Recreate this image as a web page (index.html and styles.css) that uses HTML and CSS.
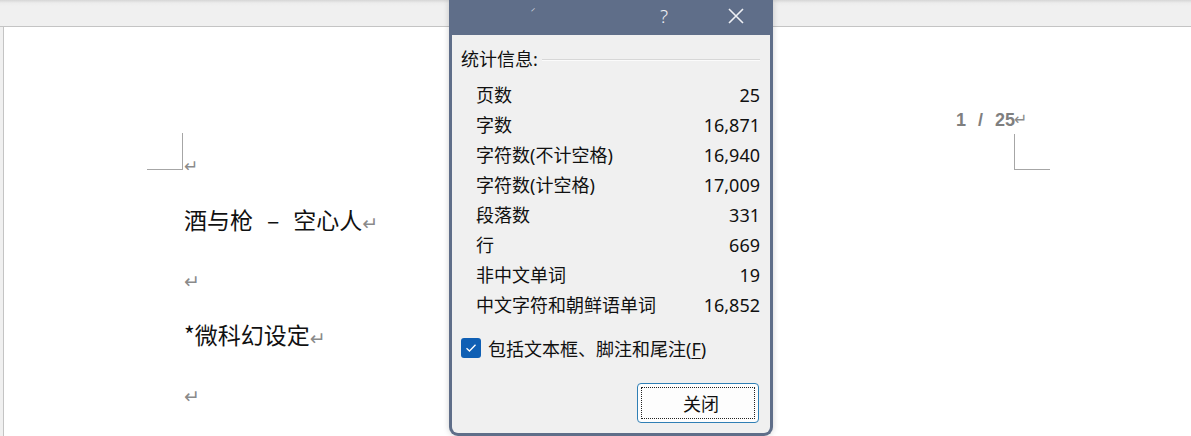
FILE: index.html
```html
<!DOCTYPE html>
<html lang="zh-CN">
<head>
<meta charset="utf-8">
<title>字数统计</title>
<link rel="stylesheet" href="styles.css">
</head>
<body>
<div class="app">
  <div class="topstrip"></div>
  <div class="page">
    <div class="header">
      <div class="mark-left"></div>
      <span class="ret ret-corner">↵</span>
      <div class="pagenum-group">
        <span class="pagenum">1 / 25</span>
        <span class="ret ret-num">↵</span>
        <span></span>
        <div class="mark-right"></div>
      </div>
    </div>
    <div class="doc">
      <p class="line">酒与枪<span class="dash">–</span>空心人<span class="ret">↵</span></p>
      <p class="line"><span class="ret">↵</span></p>
      <p class="line">*微科幻设定<span class="ret">↵</span></p>
      <p class="line"><span class="ret">↵</span></p>
    </div>
  </div>

  <div class="dialog">
    <div class="titlebar">
      <span class="title-frag">ˊ</span>
      <span class="tb-help">?</span>
      <span class="tb-close">
        <svg width="18" height="18" viewBox="0 0 18 18"><path d="M2 2 L16 16 M16 2 L2 16" stroke="#eef0f4" stroke-width="1.6" fill="none"/></svg>
      </span>
    </div>
    <div class="dlg-body">
      <div class="group-head">
        <span>统计信息:</span>
        <span class="sep"></span>
      </div>
      <div class="rows">
        <div class="row"><span>页数</span><span>25</span></div>
        <div class="row"><span>字数</span><span>16,871</span></div>
        <div class="row"><span>字符数(不计空格)</span><span>16,940</span></div>
        <div class="row"><span>字符数(计空格)</span><span>17,009</span></div>
        <div class="row"><span>段落数</span><span>331</span></div>
        <div class="row"><span>行</span><span>669</span></div>
        <div class="row"><span>非中文单词</span><span>19</span></div>
        <div class="row"><span>中文字符和朝鲜语单词</span><span>16,852</span></div>
      </div>
      <label class="check">
        <span class="box">
          <svg width="12" height="10" viewBox="0 0 12 10"><path d="M1.5 5.2 L4.5 8 L10.5 1.8" stroke="#fff" stroke-width="1.3" fill="none"/></svg>
        </span>
        <span>包括文本框、脚注和尾注(<u>F</u>)</span>
      </label>
      <div class="btn-row">
        <button class="btn"><span class="focus">关闭</span></button>
      </div>
    </div>
  </div>
</div>
</body>
</html>
```
FILE: styles.css
```css
html, body {
  margin: 0;
  padding: 0;
}
body {
  width: 1191px;
  height: 436px;
  overflow: hidden;
  background: #f0f0f0;
  font-family: "Noto Sans CJK SC", sans-serif;
}
.app {
  position: relative;
  width: 1191px;
  height: 436px;
  overflow: hidden;
}
.topstrip {
  height: 26px;
  background: linear-gradient(#d6d6d6 0, #ececec 3px, #f0f0f0 6px);
  border-bottom: 1px solid #c4c4c4;
}
.page {
  margin-left: 3px;
  border-left: 1px solid #c4c4c4;
  background: #fff;
  height: 409px;
}
.header {
  display: flex;
  align-items: flex-end;
  height: 143px;
}
.mark-left {
  margin-left: 143px;
  width: 35px;
  height: 36px;
  border-right: 1px solid #a6a6a6;
  border-bottom: 1px solid #a6a6a6;
}
.ret {
  font-family: "DejaVu Sans", sans-serif;
  color: #8a8a8a;
  font-size: 17px;
}
.ret-corner {
  line-height: 14px;
  margin-bottom: -3px;
  margin-left: 1px;
}
.pagenum-group {
  margin-left: auto;
  margin-right: 141px;
  display: grid;
  grid-template-columns: 58px 36px;
  align-items: end;
}
.pagenum {
  font-family: "Liberation Sans", Arial, sans-serif;
  font-weight: bold;
  font-size: 18px;
  color: #7f7f7f;
  line-height: 20px;
  word-spacing: 7px;
  white-space: nowrap;
  text-align: right;
  margin-bottom: 4px;
}
.ret-num {
  line-height: 20px;
  margin-bottom: 4px;
  font-size: 16px;
}
.mark-right {
  width: 35px;
  height: 35px;
  border-left: 1px solid #a6a6a6;
  border-bottom: 1px solid #a6a6a6;
}
.doc {
  padding-top: 21px;
  padding-left: 180px;
}
.line {
  margin: 0;
  height: 57.5px;
  line-height: 57.5px;
  font-size: 23px;
  color: #111;
}
.line .ret {
  font-size: 19px;
  position: relative;
  top: 1px;
}
.dash {
  margin: 0 14px 0 14px;
}

/* dialog */
.dialog {
  position: absolute;
  left: 449px;
  top: 0;
  width: 318px;
  height: 433px;
  background: #5f6e89;
  border: 3px solid #5f6e89;
  border-top: 0;
  border-radius: 0 0 9px 9px;
  box-shadow: 0 0 6px rgba(0, 0, 0, 0.18);
  display: flex;
  flex-direction: column;
}
.titlebar {
  height: 35px;
  display: flex;
  align-items: center;
  color: #eef0f4;
  flex-shrink: 0;
}
.title-frag {
  margin-left: 78px;
  font-size: 10px;
  color: #c9cfda;
  margin-top: -10px;
}
.tb-help {
  margin-left: auto;
  font-family: "Noto Sans", sans-serif;
  font-size: 19px;
  font-weight: 300;
  margin-top: -4px;
}
.tb-close {
  margin-left: 59px;
  margin-right: 25px;
  display: flex;
  margin-top: -4px;
}
.dlg-body {
  flex: 1;
  background: #f0f0f0;
  border-radius: 0 0 6px 6px;
  padding: 10px 0 0 0;
  font-family: "Noto Sans", "Noto Sans CJK SC", sans-serif;
  font-size: 18px;
  color: #111;
}
.group-head {
  display: flex;
  align-items: center;
  height: 28px;
  line-height: 28px;
  padding-left: 9px;
  padding-right: 10px;
}
.sep {
  flex: 1;
  margin-left: 4px;
  margin-top: 2px;
  border-top: 1px solid #d7d7d7;
  border-bottom: 1px solid #fbfbfb;
}
.rows {
  margin-top: 7px;
  padding-left: 24px;
  padding-right: 10px;
}
.row {
  display: flex;
  justify-content: space-between;
  height: 30px;
  line-height: 30px;
}
.check {
  margin-top: 13px;
  height: 30px;
  display: flex;
  align-items: center;
  padding-left: 9px;
}
.box {
  width: 20px;
  height: 20px;
  border-radius: 3px;
  background: #0f5fb4;
  display: flex;
  align-items: center;
  justify-content: center;
  margin-right: 7px;
}
.check u {
  text-underline-offset: 2px;
}
.btn-row {
  margin-top: 20px;
  display: flex;
  justify-content: flex-end;
  padding-right: 11px;
}
.btn {
  width: 122px;
  height: 40px;
  background: #fdfdfd;
  border: 1px solid #2f7fb5;
  border-radius: 4px;
  padding: 3px;
  font-family: "Noto Sans CJK SC", sans-serif;
  font-size: 18px;
  color: #111;
  display: flex;
}
.focus {
  flex: 1;
  border: 1px dotted #222;
  display: flex;
  align-items: center;
  justify-content: center;
  padding-left: 6px;
}
```
